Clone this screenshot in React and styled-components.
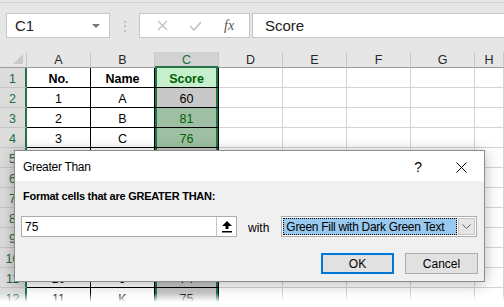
import React from 'react';
import styled, { createGlobalStyle } from 'styled-components';

const GlobalStyle = createGlobalStyle`
    html, body {
        margin: 0;
        padding: 0;
        background: #fff;
    }
    body {
        font-family: 'Liberation Sans', Arial, sans-serif;
    }
    * {
        box-sizing: border-box;
    }
`;

const Window = styled.div`
    position: relative;
    width: 504px;
    height: 307px;
    overflow: hidden;
    background: #fff;
    display: flex;
    flex-direction: column;

    // the screenshot fades out at the bottom edge
    &::after {
        content: '';
        position: absolute;
        left: 0;
        right: 0;
        bottom: 0;
        height: 14px;
        background: linear-gradient(rgba(255, 255, 255, 0), #fff 9px);
    }
`;

/* ---------- formula bar ---------- */

const FormulaBar = styled.div`
    height: 52px;
    flex: none;
    background: linear-gradient(#e6e6e6 2px, #d2d2d2 2px, #d2d2d2 3px, #e6e6e6 3px);
    display: flex;
    align-items: flex-start;
    padding: 13px 0 0 6px;
`;

const NameBox = styled.div`
    width: 104px;
    height: 25px;
    background: #fff;
    border: 1px solid #c6c6c6;
    display: flex;
    align-items: center;
    justify-content: space-between;
    padding: 0 9px 0 8px;
    font-size: 15px;
    color: #222;
`;

const Caret = styled.span`
    width: 0;
    height: 0;
    border-left: 4px solid transparent;
    border-right: 4px solid transparent;
    border-top: 4px solid #777;
`;

const Grip = styled.div`
    width: 29px;
    height: 25px;
    display: flex;
    align-items: center;
    justify-content: center;
    color: #b5b5b5;
    font-size: 14px;
`;

const FxBox = styled.div`
    width: 111px;
    height: 25px;
    background: #fff;
    border: 1px solid #c6c6c6;
    display: flex;
    align-items: center;
    justify-content: space-around;
    padding: 0 4px 0 6px;
`;

const FxLabel = styled.span`
    font-family: 'Liberation Serif', 'Times New Roman', serif;
    font-style: italic;
    font-size: 14px;
    color: #555;
`;

const FormulaInput = styled.div`
    flex: 1;
    height: 25px;
    margin-left: 2px;
    background: #fff;
    border: 1px solid #c6c6c6;
    border-right: none;
    display: flex;
    align-items: center;
    padding-left: 12px;
    font-size: 15px;
    color: #222;
`;

/* ---------- sheet ---------- */

const Sheet = styled.div`
    display: grid;
    grid-template-columns: 27px repeat(7, 64px) 1fr;
    grid-template-rows: 16px repeat(12, 20px);
`;

const Corner = styled.div`
    position: relative;
    background: #e6e6e6;
    border-right: 1px solid #c8c8c8;
    border-bottom: 1px solid #9b9b9b;

    &::after {
        content: '';
        position: absolute;
        right: 3px;
        bottom: 3px;
        border-left: 10px solid transparent;
        border-bottom: 10px solid #c9c9c9;
    }
`;

const ColHead = styled.div`
    background: ${(p) => (p.$active ? '#d2d2d2' : '#e6e6e6')};
    color: ${(p) => (p.$active ? '#1d6b3f' : '#262626')};
    border-right: 1px solid #c8c8c8;
    border-bottom: ${(p) => (p.$active ? '2px solid #217346' : '1px solid #9b9b9b')};
    font-size: 12.5px;
    display: flex;
    align-items: center;
    justify-content: center;
    padding-top: 1px;
`;

const RowHead = styled.div`
    background: #dcdcdc;
    color: #1d6b3f;
    border-right: 2px solid #217346;
    border-bottom: 1px solid #c4c4c4;
    font-size: 12.5px;
    display: flex;
    align-items: center;
    justify-content: center;
    padding-top: 2px;
`;

const Cell = styled.div`
    background: ${(p) => p.$fill || '#fff'};
    color: ${(p) => p.$color || '#000'};
    font-weight: ${(p) => (p.$bold ? 700 : 400)};
    border-right: 1px solid ${(p) => (p.$boxed ? '#000' : '#d4d4d4')};
    border-bottom: 1px solid ${(p) => (p.$boxed ? '#000' : '#d4d4d4')};
    box-shadow: ${(p) =>
        p.$selected ? 'inset 2px 0 #217346, inset -2px 0 #217346' : 'none'};
    font-size: 12.5px;
    display: flex;
    align-items: center;
    justify-content: center;
    padding-top: 2px;
`;

/* ---------- dialog ---------- */

const Dialog = styled.div`
    position: absolute;
    left: 14px;
    top: 150px;
    width: 471px;
    height: 132px;
    border: 1px solid #8c8c8c;
    background: #f0f0f0;
    box-shadow: 0 2px 14px rgba(0, 0, 0, 0.28);
    display: flex;
    flex-direction: column;
    z-index: 2;
`;

const TitleBar = styled.div`
    height: 30px;
    background: #fff;
    display: flex;
    align-items: center;
    padding-left: 8px;
    font-size: 12px;
    letter-spacing: -0.3px;
    color: #000;
`;

const TitleText = styled.span`
    flex: 1;
    padding-top: 2px;
`;

const HelpButton = styled.div`
    width: 40px;
    height: 30px;
    display: flex;
    align-items: center;
    justify-content: center;
    font-size: 14px;
    padding-top: 2px;
`;

const CloseButton = styled.div`
    width: 46px;
    height: 30px;
    display: flex;
    align-items: center;
    justify-content: center;
    padding-top: 2px;
`;

const DialogBody = styled.div`
    flex: 1;
    display: flex;
    flex-direction: column;
    padding: 8px 6px 0 6px;
`;

const Prompt = styled.div`
    font-size: 11px;
    font-weight: 700;
    letter-spacing: -0.25px;
    line-height: 15px;
    padding-left: 2px;
    color: #000;
`;

const InputRow = styled.div`
    display: flex;
    align-items: center;
    margin-top: 12px;
    height: 21px;
`;

const ValueInput = styled.div`
    width: 216px;
    height: 21px;
    background: #fff;
    border: 1px solid #adadad;
    display: flex;
    align-items: stretch;
`;

const ValueText = styled.span`
    flex: 1;
    font-size: 12px;
    padding: 3px 0 0 3px;
`;

const CollapseButton = styled.span`
    width: 20px;
    border-left: 1px solid #c4c4c4;
    background: #fff;
    display: flex;
    align-items: center;
    justify-content: center;
`;

const WithLabel = styled.span`
    font-size: 12px;
    margin: 2px 12px 0 11px;
`;

const Select = styled.div`
    width: 196px;
    height: 21px;
    background: #fff;
    border: 1px solid #adadad;
    display: flex;
    align-items: stretch;
    padding: 1px;
`;

const SelectValue = styled.span`
    flex: 1;
    background: #99c9ef;
    outline: 1px dotted #000;
    outline-offset: -1px;
    font-size: 12px;
    letter-spacing: -0.3px;
    padding: 2px 0 0 3px;
    white-space: nowrap;
    margin-right: 1px;
`;

const SelectArrow = styled.span`
    width: 17px;
    background: #e6e6e6;
    border: 1px solid #c4c4c4;
    display: flex;
    align-items: center;
    justify-content: center;
`;

const ButtonRow = styled.div`
    display: flex;
    justify-content: flex-end;
    gap: 11px;
    margin-top: 16px;
`;

const Button = styled.div`
    width: 73px;
    height: 21px;
    background: #e1e1e1;
    border: ${(p) => (p.$primary ? '2px solid #0078d7' : '1px solid #adadad')};
    font-size: 12px;
    display: flex;
    align-items: center;
    justify-content: center;
    padding-top: 1px;
`;

/* ---------- data ---------- */

const columns = ['A', 'B', 'C', 'D', 'E', 'F', 'G', 'H'];

// rows 5 to 10 sit under the dialog, only their fills matter
const rows = [
    ['No.', 'Name', 'Score'],
    ['1', 'A', '60'],
    ['2', 'B', '81'],
    ['3', 'C', '76'],
    ['', '', '', 68],
    ['', '', '', 90],
    ['', '', '', 55],
    ['', '', '', 83],
    ['', '', '', 72],
    ['', '', '', 88],
    ['10', 'J', '74'],
    ['11', 'K', '75'],
];

const scoreStyle = (value, header) => {
    if (header) return { fill: '#c6efce', color: '#006100' };
    if (Number(value) > 75) return { fill: '#9ebfa4', color: '#006100' };
    return { fill: '#c8c8c8', color: '#000' };
};

const App = () => {
    return (
        <>
            <GlobalStyle />
            <Window>
                <FormulaBar>
                    <NameBox>
                        C1
                        <Caret />
                    </NameBox>
                    <Grip>⋮</Grip>
                    <FxBox>
                        <svg width='11' height='11' viewBox='0 0 11 11'>
                            <path d='M1 1 L10 10 M10 1 L1 10' stroke='#c2c2c2' strokeWidth='1.4' />
                        </svg>
                        <svg width='13' height='10' viewBox='0 0 13 10'>
                            <path d='M1 5 L5 9 L12 1' stroke='#c2c2c2' strokeWidth='1.6' fill='none' />
                        </svg>
                        <FxLabel>fx</FxLabel>
                    </FxBox>
                    <FormulaInput>Score</FormulaInput>
                </FormulaBar>

                <Sheet>
                    <Corner />
                    {columns.map((c) => (
                        <ColHead key={c} $active={c === 'C'}>
                            {c}
                        </ColHead>
                    ))}
                    {rows.map((r, i) => {
                        const score = scoreStyle(r[3] || r[2], i === 0);
                        return (
                            <React.Fragment key={i}>
                                <RowHead>{i + 1}</RowHead>
                                <Cell $boxed $bold={i === 0}>{r[0]}</Cell>
                                <Cell $boxed $bold={i === 0}>{r[1]}</Cell>
                                <Cell
                                    $boxed
                                    $selected
                                    $bold={i === 0}
                                    $fill={score.fill}
                                    $color={score.color}
                                >
                                    {r[2]}
                                </Cell>
                                {[0, 1, 2, 3, 4].map((k) => (
                                    <Cell key={k} />
                                ))}
                            </React.Fragment>
                        );
                    })}
                </Sheet>

                <Dialog>
                    <TitleBar>
                        <TitleText>Greater Than</TitleText>
                        <HelpButton>?</HelpButton>
                        <CloseButton>
                            <svg width='11' height='11' viewBox='0 0 11 11'>
                                <path d='M0.5 0.5 L10.5 10.5 M10.5 0.5 L0.5 10.5' stroke='#000' strokeWidth='1' />
                            </svg>
                        </CloseButton>
                    </TitleBar>
                    <DialogBody>
                        <Prompt>Format cells that are GREATER THAN:</Prompt>
                        <InputRow>
                            <ValueInput>
                                <ValueText>75</ValueText>
                                <CollapseButton>
                                    <svg width='10' height='12' viewBox='0 0 10 12'>
                                        <path d='M5 0 L10 5 L6.5 5 L6.5 8 L3.5 8 L3.5 5 L0 5 Z' fill='#000' />
                                        <rect x='0' y='10' width='10' height='1.5' fill='#000' />
                                    </svg>
                                </CollapseButton>
                            </ValueInput>
                            <WithLabel>with</WithLabel>
                            <Select>
                                <SelectValue>Green Fill with Dark Green Text</SelectValue>
                                <SelectArrow>
                                    <svg width='9' height='6' viewBox='0 0 9 6'>
                                        <path d='M0.5 0.5 L4.5 4.5 L8.5 0.5' stroke='#606060' strokeWidth='1' fill='none' />
                                    </svg>
                                </SelectArrow>
                            </Select>
                        </InputRow>
                        <ButtonRow>
                            <Button $primary>OK</Button>
                            <Button>Cancel</Button>
                        </ButtonRow>
                    </DialogBody>
                </Dialog>
            </Window>
        </>
    );
};

export default App;
